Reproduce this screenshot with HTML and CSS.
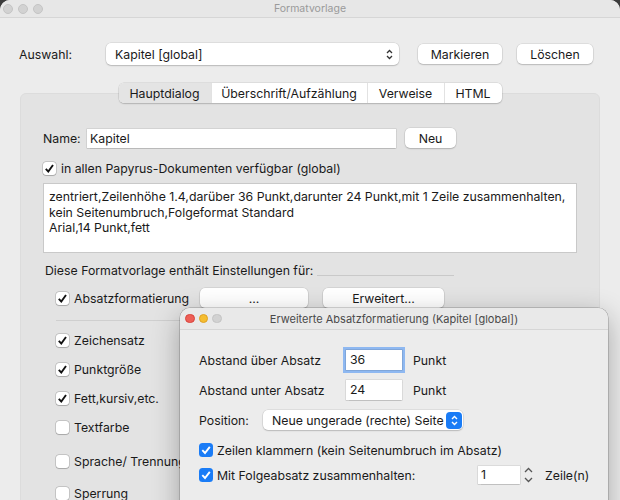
FILE: index.html
```html
<!DOCTYPE html>
<html lang="de">
<head>
  <meta charset="UTF-8">
  <meta name="viewport" content="width=device-width, initial-scale=1">
  <title>Formatvorlage</title>
  <link rel="stylesheet" href="styles.css">
</head>
<body>
  <div class="window">
    <div class="titlebar">
      <div class="lights">
        <span class="light"></span><span class="light"></span><span class="light"></span>
      </div>
      <div class="title">Formatvorlage</div>
    </div>

    <div class="content">
      <div class="select-row">
        <span class="select-label">Auswahl:</span>
        <div class="popup">
          <span>Kapitel [global]</span>
          <svg class="chevron" width="7" height="11" viewBox="0 0 7 11"><path d="M1 4 L3.5 1.5 L6 4 M1 7 L3.5 9.5 L6 7" fill="none" stroke="#333" stroke-width="1.3"/></svg>
        </div>
        <button class="btn btn-mark">Markieren</button>
        <button class="btn btn-delete">Löschen</button>
      </div>

      <div class="panel">
        <div class="tabs">
          <span class="tab active">Hauptdialog</span>
          <span class="tab">Überschrift/Aufzählung</span>
          <span class="tab">Verweise</span>
          <span class="tab">HTML</span>
        </div>

        <div class="name-row">
          <span class="name-label">Name:</span>
          <div class="field name-field">Kapitel</div>
          <button class="btn btn-new">Neu</button>
        </div>

        <div class="check-row global-row">
          <span class="check on"><svg width="13" height="13" viewBox="0 0 13 13"><path d="M2.8 6.8 L5.3 9.6 L10 3" fill="none" stroke="#111" stroke-width="1.9"/></svg></span>
          <span>in allen Papyrus-Dokumenten verfügbar (global)</span>
        </div>

        <div class="summary">
          zentriert,Zeilenhöhe 1.4,darüber 36 Punkt,darunter 24 Punkt,mit 1 Zeile zusammenhalten,<br>
          kein Seitenumbruch,Folgeformat Standard<br>
          Arial,14 Punkt,fett
        </div>

        <div class="section-head">
          <span>Diese Formatvorlage enthält Einstellungen für:</span>
          <span class="head-line"></span>
        </div>

        <div class="para-row">
          <div class="check-row para-label">
            <span class="check on"><svg width="13" height="13" viewBox="0 0 13 13"><path d="M2.8 6.8 L5.3 9.6 L10 3" fill="none" stroke="#111" stroke-width="1.9"/></svg></span>
            <span>Absatzformatierung</span>
          </div>
          <button class="btn btn-dots">...</button>
          <button class="btn btn-more">Erweitert...</button>
        </div>

        <div class="divider"></div>

        <div class="options">
          <div class="check-row option">
            <span class="check on"><svg width="13" height="13" viewBox="0 0 13 13"><path d="M2.8 6.8 L5.3 9.6 L10 3" fill="none" stroke="#111" stroke-width="1.9"/></svg></span>
            <span>Zeichensatz</span>
          </div>
          <div class="check-row option">
            <span class="check on"><svg width="13" height="13" viewBox="0 0 13 13"><path d="M2.8 6.8 L5.3 9.6 L10 3" fill="none" stroke="#111" stroke-width="1.9"/></svg></span>
            <span>Punktgröße</span>
          </div>
          <div class="check-row option">
            <span class="check on"><svg width="13" height="13" viewBox="0 0 13 13"><path d="M2.8 6.8 L5.3 9.6 L10 3" fill="none" stroke="#111" stroke-width="1.9"/></svg></span>
            <span>Fett,kursiv,etc.</span>
          </div>
          <div class="check-row option">
            <span class="check"></span>
            <span>Textfarbe</span>
          </div>
          <div class="check-row option option-wide">
            <span class="check"></span>
            <span>Sprache/ Trennung</span>
          </div>
          <div class="check-row option option-last">
            <span class="check"></span>
            <span>Sperrung</span>
          </div>
        </div>
      </div>
    </div>

    <div class="subwindow">
      <div class="titlebar sub-titlebar">
        <div class="lights">
          <span class="light red"></span><span class="light yellow"></span><span class="light"></span>
        </div>
        <div class="title sub-title">Erweiterte Absatzformatierung (Kapitel [global])</div>
      </div>

      <div class="sub-content">
        <div class="space-row">
          <span class="space-label">Abstand über Absatz</span>
          <div class="field space-field focused">36</div>
          <span class="unit">Punkt</span>
        </div>
        <div class="space-row">
          <span class="space-label">Abstand unter Absatz</span>
          <div class="field space-field">24</div>
          <span class="unit">Punkt</span>
        </div>

        <div class="position-row">
          <span class="position-label">Position:</span>
          <div class="popup position-popup">
            <span>Neue ungerade (rechte) Seite</span>
            <span class="stepper-blue"><svg width="7" height="11" viewBox="0 0 7 11"><path d="M1 4 L3.5 1.5 L6 4 M1 7 L3.5 9.5 L6 7" fill="none" stroke="#fff" stroke-width="1.4"/></svg></span>
          </div>
        </div>

        <div class="check-row blue-row">
          <span class="check blue"><svg width="14" height="14" viewBox="0 0 14 14"><path d="M3.3 7.2 L6 10 L10.8 3.8" fill="none" stroke="#fff" stroke-width="1.9"/></svg></span>
          <span>Zeilen klammern (kein Seitenumbruch im Absatz)</span>
        </div>

        <div class="keep-row">
          <div class="check-row keep-label">
            <span class="check blue"><svg width="14" height="14" viewBox="0 0 14 14"><path d="M3.3 7.2 L6 10 L10.8 3.8" fill="none" stroke="#fff" stroke-width="1.9"/></svg></span>
            <span>Mit Folgeabsatz zusammenhalten:</span>
          </div>
          <div class="field keep-field">1</div>
          <svg class="stepper" width="13" height="20" viewBox="0 0 13 20"><path d="M3 7 L6.5 3.5 L10 7 M3 13 L6.5 16.5 L10 13" fill="none" stroke="#555" stroke-width="1.3"/></svg>
          <span class="unit lines">Zeile(n)</span>
        </div>
      </div>
    </div>
  </div>
</body>
</html>
```

FILE: styles.css
```css
* {
  margin: 0;
  padding: 0;
  box-sizing: border-box;
}

body {
  background: #3c3c3c;
  font-family: Inter, "Noto Sans", sans-serif;
  font-size: 12.3px;
  color: #1a1a1a;
  overflow: hidden;
}

.window {
  position: relative;
  width: 620px;
  height: 500px;
  background: #ececec;
  border-radius: 10px 10px 0 0;
  overflow: hidden;
}

/* title bars */
.titlebar {
  display: grid;
  grid-template-columns: 1fr auto 1fr;
  align-items: center;
  height: 18px;
  background: #e7e7e7;
  border-bottom: 1px solid #d6d6d6;
}

.lights {
  display: flex;
  gap: 5px;
  padding-left: 3px;
}

.light {
  width: 10px;
  height: 10px;
  border-radius: 50%;
  background: #d2d2d2;
  border: 0.5px solid #c4c4c4;
}

.light.red {
  background: #ee5f57;
  border-color: #d9463e;
}

.light.yellow {
  background: #f5bd2f;
  border-color: #dea126;
}

.title {
  font-size: 10.5px;
  color: #9a9a9a;
}

/* controls */
.btn {
  font-family: inherit;
  font-size: 12.3px;
  color: #1a1a1a;
  height: 20px;
  background: #fff;
  border: none;
  border-radius: 5px;
  box-shadow: 0 0 0 0.5px rgba(0, 0, 0, 0.12), 0 1px 1.5px rgba(0, 0, 0, 0.16);
}

.field {
  background: #fff;
  height: 20px;
  line-height: 20px;
  padding: 0 4px;
  box-shadow: 0 0 0 0.5px rgba(0, 0, 0, 0.14), 0 0.5px 1px rgba(0, 0, 0, 0.12);
}

.popup {
  display: flex;
  align-items: center;
  justify-content: space-between;
  white-space: nowrap;
  background: #fff;
  border-radius: 5px;
  box-shadow: 0 0 0 0.5px rgba(0, 0, 0, 0.12), 0 1px 1.5px rgba(0, 0, 0, 0.16);
}

.check-row {
  display: flex;
  align-items: center;
  white-space: nowrap;
}

.check {
  flex: none;
  width: 13px;
  height: 13px;
  margin-right: 5px;
  background: #fff;
  border-radius: 3px;
  box-shadow: 0 0 0 0.5px rgba(0, 0, 0, 0.25), 0 0.5px 1px rgba(0, 0, 0, 0.15);
}

.check svg {
  display: block;
}

.check.blue {
  width: 14px;
  height: 14px;
  margin-right: 4px;
  background: #1a7cf6;
  border-radius: 3.5px;
  box-shadow: none;
}

/* main content */
.select-row {
  display: flex;
  align-items: center;
  height: 22px;
  margin-top: 25px;
  padding-left: 19px;
}

.select-label {
  width: 87px;
}

.select-row .popup {
  width: 293px;
  height: 22px;
  padding: 0 6px 0 9px;
}

.btn-mark {
  width: 84px;
  margin-left: 19px;
}

.btn-delete {
  width: 76px;
  margin-left: 15px;
}

.panel {
  display: flex;
  flex-direction: column;
  width: 580px;
  height: 420px;
  margin: 28px 0 0 20px;
  padding: 0 22px;
  background: #e3e3e3;
  border: 1px solid #dcdcdc;
  border-radius: 6px;
}

.tabs {
  display: flex;
  align-self: center;
  height: 20px;
  margin-top: -11px;
  background: #fff;
  border-radius: 5px;
  box-shadow: 0 0 0 0.5px rgba(0, 0, 0, 0.12), 0 1px 1.5px rgba(0, 0, 0, 0.16);
}

.tab {
  display: flex;
  align-items: center;
  justify-content: center;
  border-left: 1px solid #e2e2e2;
}

.tab:nth-child(1) {
  width: 92px;
  border-left: none;
}

.tab:nth-child(2) {
  width: 156px;
}

.tab:nth-child(3) {
  width: 77px;
}

.tab:nth-child(4) {
  width: 58px;
}

.tab.active {
  background: #e4e4e4;
  border-radius: 5px 0 0 5px;
}

.name-row {
  display: flex;
  align-items: center;
  margin-top: 25px;
}

.name-label {
  width: 44px;
}

.name-field {
  width: 309px;
  height: 19px;
  line-height: 19px;
  padding-left: 3px;
}

.btn-new {
  width: 51px;
  margin-left: 9px;
}

.global-row {
  margin-top: 14px;
  height: 13px;
}

.summary {
  height: 70px;
  margin-top: 8px;
  padding: 5px;
  line-height: 15.5px;
  white-space: nowrap;
  overflow: hidden;
  background: #fff;
  border: 1px solid #c9c9c9;
}

.section-head {
  display: flex;
  height: 16px;
  margin-top: 10px;
  padding-left: 2px;
  line-height: 16px;
}

.head-line {
  width: 137px;
  height: 1px;
  margin: 12px 0 0 4px;
  background: #c9c9c9;
}

.para-row {
  display: flex;
  align-items: center;
  height: 20px;
  margin-top: 9px;
  padding-left: 13px;
}

.para-label {
  width: 144px;
}

.btn-dots {
  width: 108px;
}

.btn-more {
  width: 121px;
  margin-left: 15px;
}

.divider {
  width: 400px;
  height: 1px;
  margin: 12px 0 0 13px;
  background: #cfcfcf;
}

.options {
  padding-left: 13px;
  margin-top: 5px;
}

.option {
  height: 29px;
}

.option-wide {
  margin-top: 5px;
}

.option-last {
  margin-top: 3px;
}

/* second window */
.subwindow {
  position: absolute;
  left: 180px;
  top: 308px;
  width: 428px;
  height: 220px;
  background: #ececec;
  border-radius: 10px;
  box-shadow: 0 0 0 0.5px rgba(0, 0, 0, 0.3), 0 8px 28px rgba(0, 0, 0, 0.3);
  overflow: hidden;
}

.sub-titlebar {
  height: 22px;
  background: #e9e9e9;
}

.sub-titlebar .lights {
  gap: 4px;
  padding-left: 5px;
}

.sub-titlebar .light {
  width: 9.5px;
  height: 9.5px;
}

.sub-title {
  font-size: 11px;
  color: #4a4a4a;
}

.sub-content {
  padding: 20px 0 0 19px;
}

.space-row {
  display: flex;
  align-items: center;
  height: 20px;
  margin-bottom: 10px;
}

.space-label {
  width: 147px;
}

.space-field {
  width: 56px;
}

.space-field.focused {
  box-shadow: 0 0 0 0.5px rgba(0, 0, 0, 0.2), 0 0 0 3px rgba(80, 150, 245, 0.6);
}

.unit {
  margin-left: 11px;
}

.position-row {
  display: flex;
  align-items: center;
  height: 20px;
  margin-top: 6px;
}

.position-label {
  width: 64px;
}

.position-popup {
  width: 200px;
  height: 20px;
  padding: 0 1px 0 9px;
}

.stepper-blue {
  display: flex;
  align-items: center;
  justify-content: center;
  flex: none;
  width: 16px;
  height: 17px;
  background: #1a7cf6;
  border-radius: 4px;
}

.blue-row {
  height: 18px;
  margin-top: 11px;
}

.keep-row {
  display: flex;
  align-items: center;
  height: 18px;
  margin-top: 7px;
}

.keep-label {
  width: 279px;
}

.keep-field {
  width: 42px;
  height: 18px;
  line-height: 18px;
  padding-left: 3px;
}

.stepper {
  margin-left: 2px;
}

.lines {
  margin-left: 10px;
}
```
